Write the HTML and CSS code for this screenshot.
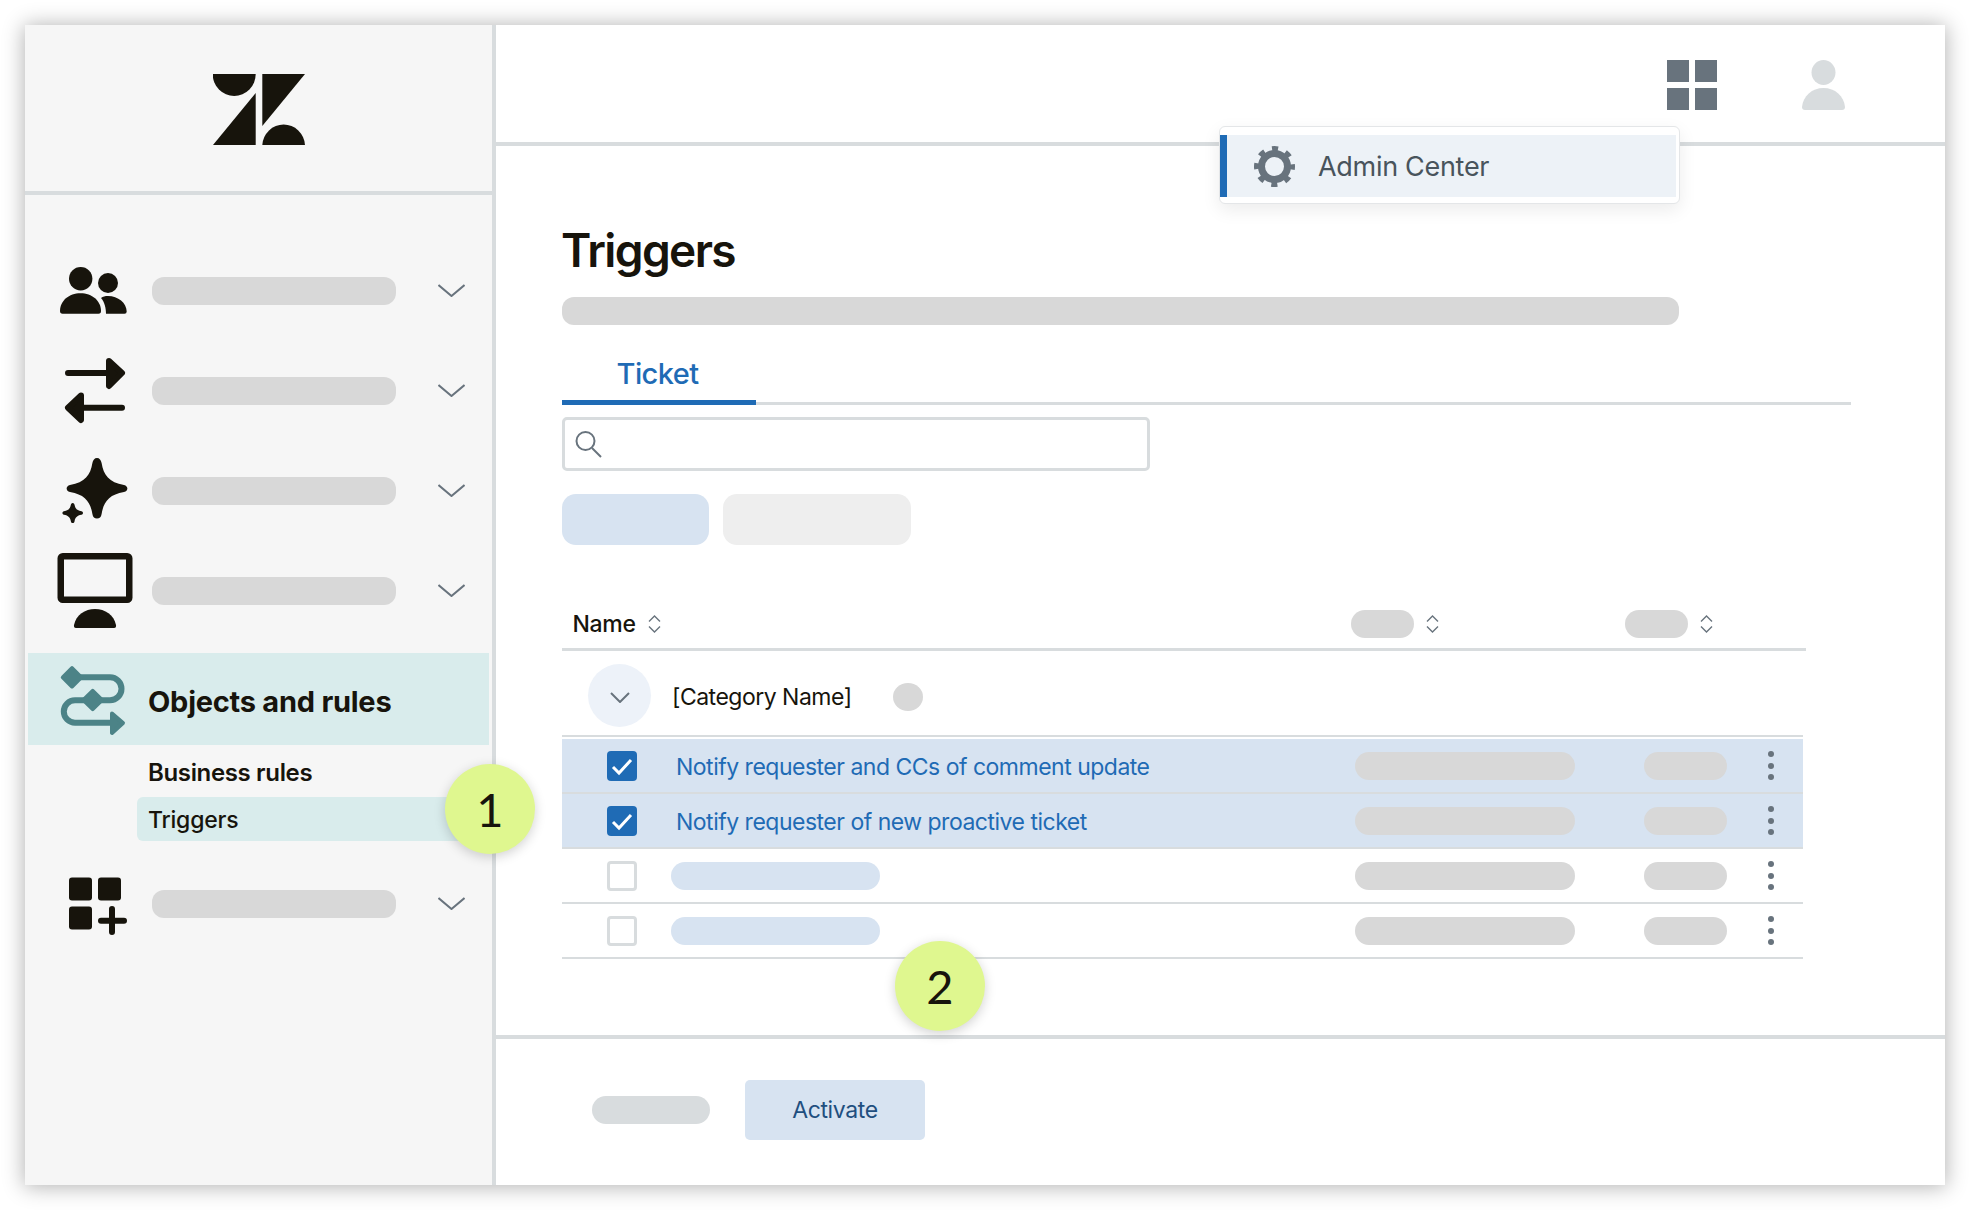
FILE: index.html
```html
<!DOCTYPE html>
<html lang="en">
<head>
  <meta charset="UTF-8">
  <meta name="viewport" content="width=device-width, initial-scale=1.0">
  <title>Triggers - Admin Center</title>
  <link rel="stylesheet" href="styles.css">
</head>
<body>
  <div class="page">
  <div class="window">
    <aside class="sidebar">
      <div class="logo">
        <svg width="92" height="71" viewBox="213 74 92 71">
          <path class="ink" d="M212.7 74H255.7A21.5 22 0 0 1 212.7 74Z"/>
          <path class="ink" d="M255.7 93V145H213Z"/>
          <path class="ink" d="M262.3 74H305L262.3 126Z"/>
          <path class="ink" d="M262.3 145A21.4 22 0 0 1 305 145Z"/>
        </svg>
      </div>

      <nav class="nav">
        <div class="nav-row">
          <svg class="nav-icon" viewBox="25 241 127 100">
            <circle class="ink" cx="80.7" cy="278.7" r="11.7"/>
            <circle class="ink" cx="108" cy="283" r="10"/>
            <path class="ink" d="M60 311C60 301 69 293.3 80.5 293.3C92 293.3 101 301 101 311Q101 313.7 98.500 313.700H62.500Q60 313.700 60 311Z"/>
            <path class="ink" d="M101 298C103 296.500 105 296 108 296C118 296 126.700 303 126.700 311.500Q126.700 313.700 124.500 313.700H106C106 308 104.500 302 101 298Z"/>
          </svg>
          <span class="nav-pill"></span>
          <svg class="chevron" viewBox="0 0 27 13"><path d="M.5 1 13.500 12 26.500 1"/></svg>
        </div>
        <div class="nav-row">
          <svg class="nav-icon" viewBox="25 341 127 100">
            <path class="ink arrow" d="M68 373H107M109 361 122 373 109 386Z"/>
            <path class="ink arrow" d="M122 407.700H83M81 395.500 68 407.700 81 420Z"/>
          </svg>
          <span class="nav-pill"></span>
          <svg class="chevron" viewBox="0 0 27 13"><path d="M.5 1 13.500 12 26.500 1"/></svg>
        </div>
        <div class="nav-row">
          <svg class="nav-icon" viewBox="25 441 127 100">
            <path class="ink" d="M97 458C99.500 458 101 460 101.600 463C103.500 475 109 482.500 124 485C128.500 486 128.500 491 124 492C109 494.500 103.500 502 101.600 514C101 517.500 99.500 518.600 97 518.600C94.500 518.600 93 517.500 92.400 514C90.500 502 85 494.500 70 492C65.500 491 65.500 486 70 485C85 482.500 90.500 475 92.400 463C93 460 94.500 458 97 458Z"/>
            <path class="ink" d="M72.700 503C74 503 74.300 504 74.600 505C75.200 508.500 77 510.500 81.500 511.300C83.500 511.800 83.500 514.200 81.500 514.700C77 515.500 75.200 517.500 74.600 521C74.300 522.500 74 523 72.700 523C71.400 523 71.100 522.500 70.800 521C70.200 517.500 68.400 515.500 63.900 514.700C61.900 514.200 61.900 511.800 63.900 511.300C68.400 510.500 70.200 508.500 70.800 505C71.100 504 71.400 503 72.700 503Z"/>
          </svg>
          <span class="nav-pill"></span>
          <svg class="chevron" viewBox="0 0 27 13"><path d="M.5 1 13.500 12 26.500 1"/></svg>
        </div>
        <div class="nav-row">
          <svg class="nav-icon" viewBox="25 541 127 100">
            <rect class="monitor" x="60.750" y="556.250" width="68.500" height="43.500" rx="2"/>
            <path class="ink" d="M74 625C76 615 85 609 95 609C105 609 114 615 116 625Q116.500 628 114 628H76Q73.500 628 74 625Z"/>
          </svg>
          <span class="nav-pill"></span>
          <svg class="chevron" viewBox="0 0 27 13"><path d="M.5 1 13.500 12 26.500 1"/></svg>
        </div>

        <div class="nav-active">
          <svg class="flow-icon" viewBox="28 653 120 92">
            <path class="flow-line" d="M72 677.300H110A11.500 11.500 0 0 1 110 700.300H75A11.200 11.200 0 0 0 75 722.700H112"/>
            <rect class="flow-fill" x="63.500" y="668.800" width="17" height="17" rx="2" transform="rotate(45 72 677.300)"/>
            <rect class="flow-fill" x="84.200" y="691.500" width="17" height="17" rx="2" transform="rotate(45 92.700 700)"/>
            <path class="flow-fill flow-head" d="M112 713.500 123 723 112 733Z"/>
          </svg>
          <span>Objects and rules</span>
        </div>
        <div class="sub-title">Business rules</div>
        <div class="sub-active">Triggers</div>

        <div class="nav-row nav-last">
          <svg class="nav-icon" viewBox="25 854 127 100">
            <rect class="ink" x="69" y="877.500" width="23" height="23" rx="3"/>
            <rect class="ink" x="98" y="877.500" width="23" height="23" rx="3"/>
            <rect class="ink" x="69" y="906.500" width="23" height="23" rx="3"/>
            <path class="plus" d="M101 920.700H124M112 909V932"/>
          </svg>
          <span class="nav-pill"></span>
          <svg class="chevron" viewBox="0 0 27 13"><path d="M.5 1 13.500 12 26.500 1"/></svg>
        </div>
      </nav>
    </aside>

    <main class="main">
      <header class="topbar">
        <div class="grid-icon"><i></i><i></i><i></i><i></i></div>
        <svg class="user-icon" viewBox="0 0 43 50">
          <ellipse cx="21.500" cy="12.500" rx="12" ry="12.500"/>
          <path d="M0 47C1 36 10 28 21.500 28C33 28 42 36 43 47Q43 50 40 50H3Q0 50 0 47Z"/>
        </svg>
      </header>

      <section class="content">
        <h1>Triggers</h1>
        <div class="desc-pill"></div>
        <div class="tabs"><div class="tab">Ticket</div></div>
        <div class="search">
          <svg width="27" height="28" viewBox="0 0 27 28"><circle cx="10.500" cy="11" r="9"/><path d="M17 18 26 27"/></svg>
        </div>
        <div class="filters">
          <div class="filter filter-blue"></div>
          <div class="filter filter-grey"></div>
        </div>

        <div class="table">
          <div class="thead">
            <div class="th th-name">Name
              <svg class="sort" viewBox="0 0 13 18"><path d="M1 6.500 6.500 1 12 6.500M1 11.500 6.500 17 12 11.500"/></svg>
            </div>
            <div class="th th-mid">
              <span class="head-pill"></span>
              <svg class="sort" viewBox="0 0 13 18"><path d="M1 6.500 6.500 1 12 6.500M1 11.500 6.500 17 12 11.500"/></svg>
            </div>
            <div class="th">
              <span class="head-pill"></span>
              <svg class="sort" viewBox="0 0 13 18"><path d="M1 6.500 6.500 1 12 6.500M1 11.500 6.500 17 12 11.500"/></svg>
            </div>
          </div>

          <div class="group">
            <div class="group-btn">
              <svg width="20" height="11" viewBox="0 0 20 11"><path d="M1 1 10 10 19 1"/></svg>
            </div>
            <span class="group-name">[Category Name]</span>
            <span class="group-dot"></span>
          </div>

          <div class="row row-selected">
            <div class="check check-on"><svg viewBox="0 0 30 30"><path d="M6 16 12 22 24 9"/></svg></div>
            <a class="row-link">Notify requester and CCs of comment update</a>
            <span class="cell-pill cell-wide"></span>
            <span class="cell-pill cell-small"></span>
            <div class="dots"><i></i><i></i><i></i></div>
          </div>
          <div class="row row-selected">
            <div class="check check-on"><svg viewBox="0 0 30 30"><path d="M6 16 12 22 24 9"/></svg></div>
            <a class="row-link">Notify requester of new proactive ticket</a>
            <span class="cell-pill cell-wide"></span>
            <span class="cell-pill cell-small"></span>
            <div class="dots"><i></i><i></i><i></i></div>
          </div>
          <div class="row">
            <div class="check"></div>
            <span class="link-pill"></span>
            <span class="cell-pill cell-wide"></span>
            <span class="cell-pill cell-small"></span>
            <div class="dots"><i></i><i></i><i></i></div>
          </div>
          <div class="row">
            <div class="check"></div>
            <span class="link-pill"></span>
            <span class="cell-pill cell-wide"></span>
            <span class="cell-pill cell-small"></span>
            <div class="dots"><i></i><i></i><i></i></div>
          </div>
        </div>
      </section>

      <footer class="footer">
        <div class="footer-pill"></div>
        <button class="activate">Activate</button>
      </footer>
    </main>

    <div class="menu">
      <div class="menu-item">
        <svg class="gear" viewBox="0 0 41 41">
          <circle class="gear-teeth" cx="20.500" cy="20.500" r="17.500"/>
          <circle class="gear-ring" cx="20.500" cy="20.500" r="13"/>
        </svg>
        <span>Admin Center</span>
      </div>
    </div>

    <div class="badge badge-one">1</div>
    <div class="badge badge-two">2</div>
  </div>
  </div>
</body>
</html>
```

FILE: styles.css
```css
* { box-sizing: border-box; }
body { margin: 0; background: #fff; font-family: Inter, "Noto Sans", sans-serif; color: #17140c; }

.page { width: 1970px; height: 1210px; padding: 25px; background: #fff; }
.window { position: relative; display: flex; width: 1920px; height: 1160px; background: #fff; box-shadow: 0 1px 20px 1px rgba(0,0,0,0.3); }

/* sidebar */
.sidebar { width: 471px; background: #f6f6f6; border-right: 4px solid #d8dcde; }
.logo { display: flex; justify-content: center; align-items: center; height: 170px; padding-top: 3px; border-bottom: 4px solid #d8dcde; }
.ink { fill: #17140c; }
.arrow { stroke: #17140c; stroke-width: 6; stroke-linecap: round; stroke-linejoin: round; }
.monitor { fill: none; stroke: #17140c; stroke-width: 6.5; }
.plus { fill: none; stroke: #17140c; stroke-width: 6; stroke-linecap: round; }

.nav { padding-top: 46px; }
.nav-row { display: flex; align-items: center; height: 100px; }
.nav-icon { flex: none; width: 127px; height: 100px; }
.nav-pill { width: 244px; height: 28px; border-radius: 12px; background: #d8d8d8; }
.chevron { flex: none; width: 27px; height: 13px; margin: -1px 0 0 42px; fill: none; stroke: #68737d; stroke-width: 2; }
.nav-last { margin-top: 13px; }

.nav-active { display: flex; align-items: center; height: 92px; margin: 12px 3px 0; padding-top: 4px; background: #d9ecec; font-size: 29px; font-weight: 700; letter-spacing: -0.25px; }
.flow-icon { flex: none; width: 120px; height: 92px; margin-top: -4px; }
.flow-line { fill: none; stroke: #4c8387; stroke-width: 6; }
.flow-fill { fill: #4c8387; }
.flow-head { stroke: #4c8387; stroke-width: 4; stroke-linejoin: round; }
.sub-title { height: 52px; padding: 13px 0 0 123px; font-size: 24px; font-weight: 600; line-height: 29px; letter-spacing: -0.35px; }
.sub-active { height: 44px; margin-left: 112px; padding: 1px 0 0 11px; border-radius: 6px 0 0 6px; background: #d9ecec; font-size: 23px; font-weight: 500; line-height: 44px; letter-spacing: -0.2px; }

/* main column */
.main { display: flex; flex-direction: column; flex: 1; }
.topbar { display: flex; justify-content: flex-end; height: 121px; padding: 35px 100px 0 0; border-bottom: 4px solid #d8dcde; }
.grid-icon { display: grid; grid-template-columns: 22px 22px; grid-template-rows: 22px 22px; gap: 6px; width: 50px; height: 50px; }
.grid-icon i { background: #68737d; }
.user-icon { width: 43px; height: 50px; margin-left: 85px; fill: #d8dcde; }

.content { flex: 1; padding: 76px 0 0 66px; }
h1 { margin: 0 0 0 -1px; font-size: 46px; font-weight: 600; line-height: 56px; letter-spacing: -1.6px; }
.desc-pill { width: 1117px; height: 28px; margin-top: 19px; border-radius: 12px; background: #d8d8d8; }
.tabs { width: 1289px; height: 57px; margin-top: 23px; border-bottom: 3px solid #d8dcde; }
.tab { width: 194px; height: 57px; padding: 8px 3px 0 0; border-bottom: 5px solid #1f6bb5; color: #1f6bb5; font-size: 29px; font-weight: 500; line-height: 35px; letter-spacing: -0.6px; text-align: center; }
.search { display: flex; align-items: center; width: 588px; height: 54px; margin-top: 12px; padding-left: 10px; border: 3px solid #d8dcde; border-radius: 5px; }
.search svg { fill: none; stroke: #68737d; stroke-width: 2; }
.filters { display: flex; gap: 14px; margin-top: 23px; }
.filter { height: 51px; border-radius: 14px; }
.filter-blue { width: 147px; background: #d7e3f1; }
.filter-grey { width: 188px; background: #eeeeee; }

/* table */
.table { width: 1244px; margin-top: 52px; }
.thead { display: grid; grid-template-columns: 789px 274px 1fr; align-items: center; height: 54px; padding-top: 2px; border-bottom: 3px solid #d8dcde; font-size: 23px; font-weight: 500; letter-spacing: -0.3px; }
.th { display: flex; align-items: center; }
.th-name { padding-left: 10.500px; }
.sort { flex: none; width: 13px; height: 18px; margin-left: 12px; fill: none; stroke: #68737d; stroke-width: 1.400; }
.head-pill { width: 63px; height: 28px; border-radius: 14px; background: #d8d8d8; }

.group { display: flex; align-items: center; width: 1241px; height: 86px; padding: 5px 0 0 26px; border-bottom: 2px solid #d8dcde; }
.group-btn { display: flex; justify-content: center; align-items: center; width: 63px; height: 63px; border-radius: 50%; background: #edf2f9; }
.group-btn svg { margin-top: 4px; fill: none; stroke: #68737d; stroke-width: 2; }
.group-name { margin: 3px 0 0 21px; font-size: 23px; letter-spacing: -0.5px; }
.group-dot { width: 30px; height: 28px; margin: 3px 0 0 41px; border-radius: 50%; background: #d8d8d8; }

.row { display: grid; grid-template-columns: 115px 678px 289px 124px 1fr; align-items: center; width: 1241px; height: 55px; border-bottom: 2px solid #d8dcde; }
.row-selected { background: #d7e3f1; }
.group + .row { margin-top: 2px; }
.check { width: 30px; height: 30px; margin-left: 45px; border: 3px solid #d8dcde; border-radius: 4px; background: #fff; }
.check-on { border: 0; background: #1f6bb5; }
.check-on svg { display: block; fill: none; stroke: #fff; stroke-width: 3; }
.row-link { margin-left: -1px; padding-top: 2px; color: #1f6bb5; font-size: 23px; letter-spacing: -0.5px; }
.link-pill { width: 209px; height: 28px; margin-left: -6px; border-radius: 14px; background: #d7e3f1; }
.cell-pill { height: 28px; border-radius: 14px; background: #d8d8d8; }
.cell-wide { width: 220px; }
.cell-small { width: 83px; }
.dots { display: flex; flex-direction: column; gap: 5.500px; width: 6px; }
.dots i { width: 6px; height: 6px; border-radius: 50%; background: #68737d; }

/* footer */
.footer { display: flex; align-items: center; gap: 35px; height: 150px; padding: 0 0 4px 96px; border-top: 4px solid #d8dcde; }
.footer-pill { width: 118px; height: 28px; border-radius: 14px; background: #d8dcde; }
.activate { width: 180px; height: 60px; border: 0; border-radius: 5px; background: #d7e3f1; color: #1f4f7f; font-family: inherit; font-size: 23px; letter-spacing: -0.35px; }

/* things laid over the page */
.menu { position: absolute; left: 1194px; top: 101px; width: 461px; height: 78px; padding: 8px 3px 6px 0; border: 1px solid #e4e6e8; border-radius: 6px; background: #fff; box-shadow: 0 6px 18px rgba(0,0,0,0.08); }
.menu-item { display: flex; align-items: center; height: 100%; padding-left: 27px; border-left: 7px solid #1f6bb5; background: #edf2f7; color: #49545c; font-size: 27px; letter-spacing: -0.3px; }
.gear { width: 41px; height: 41px; margin-right: 23px; fill: none; stroke: #68737d; }
.gear-teeth { stroke-width: 6; stroke-dasharray: 6 7.744; stroke-dashoffset: 3; }
.gear-ring { stroke-width: 7; }

.badge { position: absolute; display: flex; justify-content: center; align-items: center; width: 90px; height: 90px; border-radius: 50%; background: #dff78f; box-shadow: 0 3px 12px rgba(0,0,0,0.18); font-family: Lato, sans-serif; font-size: 47px; font-weight: 400; }
.badge-one { left: 420px; top: 739px; }
.badge-two { left: 870px; top: 916px; }
```
